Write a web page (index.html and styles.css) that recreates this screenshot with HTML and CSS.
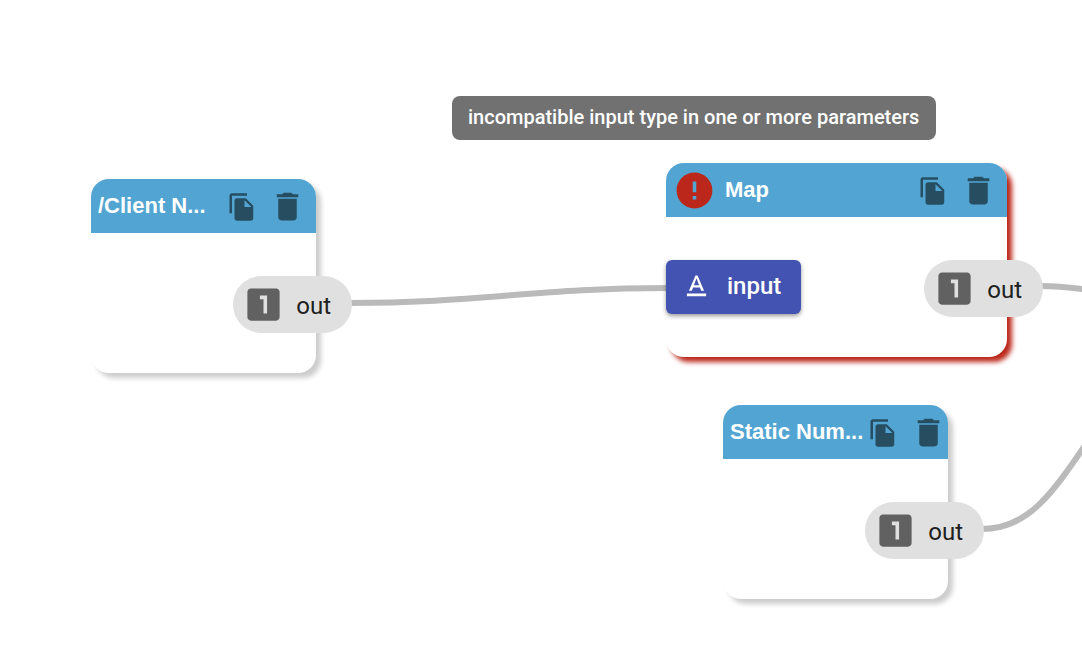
FILE: index.html
```html
<!DOCTYPE html>
<html lang="en">
<head>
<meta charset="utf-8">
<title>Flow editor</title>
<link rel="stylesheet" href="styles.css">
</head>
<body>
<svg class="symbols" aria-hidden="true">
  <symbol id="copy" viewBox="0 0 24 24"><path d="M16 1H4c-1.1 0-2 .9-2 2v14h2V3h12V1zm-1 4l6 6v10c0 1.1-.9 2-2 2H7.990C6.890 23 6 22.100 6 21V7c0-1.100.890-2 1.990-2h7zm-1 7h5.500L14 6.500V12z"/></symbol>
  <symbol id="trash" viewBox="0 0 24 24"><path d="M6 19c0 1.100.900 2 2 2h8c1.100 0 2-.900 2-2V7H6v12zM19 4h-3.500l-1-1h-5l-1 1H5v2h14V4z"/></symbol>
  <symbol id="one" viewBox="0 0 24 24"><path d="M19 3H5c-1.100 0-2 .900-2 2v14c0 1.100.900 2 2 2h14c1.100 0 2-.900 2-2V5c0-1.100-.900-2-2-2zm-5 14h-2V9h-2V7h4v10z"/></symbol>
  <symbol id="alert" viewBox="0 0 24 24"><path d="M12 2C6.480 2 2 6.480 2 12s4.480 10 10 10 10-4.480 10-10S17.520 2 12 2zm1 15h-2v-2h2v2zm0-4h-2V7h2v6z"/></symbol>
  <symbol id="text" viewBox="0 0 24 24"><path d="M5 17v2h14v-2H5zm4.500-4.200h5l.900 2.200h2.100L12.750 4h-1.500L6.500 15h2.100l.900-2.200zM12 5.980L13.870 11h-3.740L12 5.980z"/></symbol>
</svg>
<main class="canvas">
  <svg class="wires" aria-hidden="true">
    <path d="M350 303C477 303 539 288 668 288"/>
    <path d="M1041 286C1062 286 1074 288 1090 290"/>
    <path d="M982 529C1028 529 1052 494 1088 441"/>
  </svg>

  <div class="tooltip" role="tooltip">incompatible input type in one or more parameters</div>

  <section class="node node-client">
    <header class="node-header">
      <h2 class="title">/Client N...</h2>
      <div class="actions">
        <button class="icon-button" aria-label="Copy"><svg class="icon-copy"><use href="#copy"/></svg></button>
        <button class="icon-button" aria-label="Delete"><svg class="icon-trash"><use href="#trash"/></svg></button>
      </div>
    </header>
    <div class="ports">
      <button class="output"><svg class="icon-type"><use href="#one"/></svg><span class="output-label">out</span></button>
    </div>
  </section>

  <section class="node node-map invalid">
    <header class="node-header">
      <svg class="icon-alert" aria-label="Error" role="img"><use href="#alert"/></svg>
      <h2 class="title">Map</h2>
      <div class="actions">
        <button class="icon-button" aria-label="Copy"><svg class="icon-copy"><use href="#copy"/></svg></button>
        <button class="icon-button" aria-label="Delete"><svg class="icon-trash"><use href="#trash"/></svg></button>
      </div>
    </header>
    <div class="ports">
      <button class="input"><svg class="icon-text"><use href="#text"/></svg>input</button>
      <button class="output"><svg class="icon-type"><use href="#one"/></svg><span class="output-label">out</span></button>
    </div>
  </section>

  <section class="node node-static">
    <header class="node-header">
      <h2 class="title">Static Num...</h2>
      <div class="actions">
        <button class="icon-button" aria-label="Copy"><svg class="icon-copy"><use href="#copy"/></svg></button>
        <button class="icon-button" aria-label="Delete"><svg class="icon-trash"><use href="#trash"/></svg></button>
      </div>
    </header>
    <div class="ports">
      <button class="output"><svg class="icon-type"><use href="#one"/></svg><span class="output-label">out</span></button>
    </div>
  </section>
</main>
</body>
</html>
```
FILE: styles.css
```css
* {
  box-sizing: border-box;
}

body {
  margin: 0;
  background: #fff;
  font-family: Roboto, sans-serif;
}

button {
  border: 0;
  font: inherit;
  cursor: pointer;
}

svg {
  display: block;
  flex: none;
  fill: currentColor;
}

.symbols {
  position: absolute;
  width: 0;
  height: 0;
}

.canvas {
  position: relative;
  min-height: 100vh;
  overflow: hidden;
}

.wires {
  position: absolute;
  width: 100%;
  height: 100%;
  fill: none;
  stroke: #bababa;
  stroke-width: 6px;
}

.tooltip {
  position: absolute;
  left: 452px;
  top: 96px;
  padding: 9px 17px 11px 16px;
  border-radius: 8px;
  background: #717171;
  color: #fff;
  font-size: 20px;
  font-weight: 500;
  line-height: 24px;
  white-space: nowrap;
}

.node {
  position: absolute;
  width: 225px;
  border-radius: 18px;
  background: #fff;
  box-shadow: 5px 5px 5px rgba(0, 0, 0, 0.2);
}

.node-client {
  left: 91px;
  top: 179px;
}

.node-map {
  left: 666px;
  top: 163px;
  width: 341px;
}

.node-static {
  left: 723px;
  top: 405px;
}

.invalid {
  box-shadow: 5px 5px 5px #bb271a;
}

.node-header {
  display: flex;
  align-items: center;
  height: 54px;
  padding: 0 10px 0 7px;
  border-radius: 18px 18px 0 0;
  background: #52a5d2;
}

.title {
  flex: 1 0 auto;
  margin: 0;
  color: #fff;
  font: bold 22px/26px "Liberation Sans", Arial, sans-serif;
}

.actions {
  display: flex;
  flex: none;
  align-items: center;
  gap: 12px;
  margin-left: 5px;
}

.icon-button {
  padding: 1px 0 0;
  background: none;
  color: #264d60;
}

.icon-copy {
  width: 30px;
  height: 30px;
}

.icon-trash {
  width: 37px;
  height: 37px;
}

.icon-alert {
  width: 43px;
  height: 43px;
  margin-right: 9px;
  color: #bb271a;
}

.ports {
  display: flex;
  align-items: flex-start;
  padding: 43px 0 40px;
}

.input {
  display: flex;
  align-items: center;
  gap: 14px;
  height: 54px;
  padding: 0 20px 2px 14px;
  border-radius: 6px;
  background: #4353b1;
  box-shadow: 0 2px 4px rgba(0, 0, 0, 0.4);
  color: #fff;
  font-size: 24px;
  font-weight: 500;
}

.icon-text {
  width: 33px;
  height: 33px;
}

.output {
  display: flex;
  align-items: center;
  gap: 11px;
  height: 57px;
  margin: 0 -36px 0 auto;
  padding: 0 21px 0 9px;
  border-radius: 29px;
  background: #e0e0e0;
  color: #212121;
  font-size: 24px;
}

.output-label {
  padding-top: 2px;
}

.icon-type {
  width: 43px;
  height: 43px;
  color: #616161;
}
```
